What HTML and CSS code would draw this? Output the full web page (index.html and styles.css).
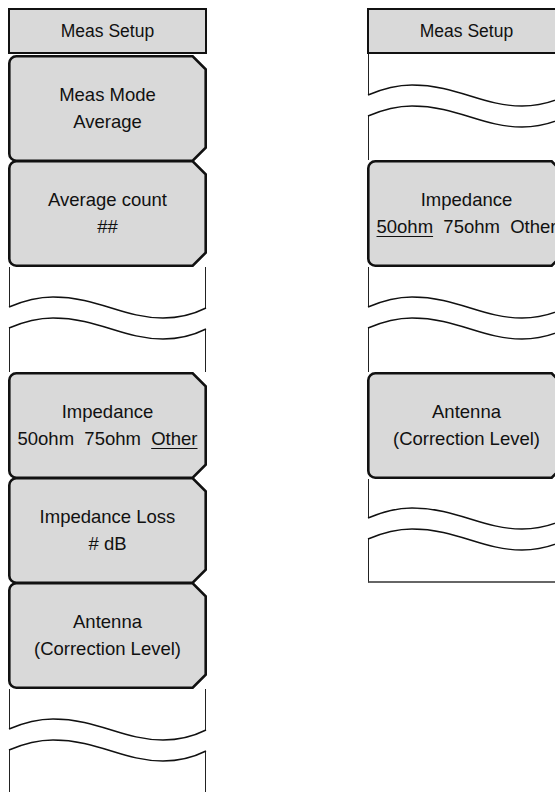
FILE: index.html
```html
<!DOCTYPE html>
<html lang="en">
<head>
    <meta charset="UTF-8">
    <meta name="viewport" content="width=device-width, initial-scale=1.0">
    <title>Meas Setup Menu</title>
    <link rel="stylesheet" href="styles.css">
</head>
<body>
    <svg class="defs" width="0" height="0">
        <symbol id="keyShape" viewBox="0 0 199 107">
            <path d="M8.3 1.3 H184.7 L197.7 14.3 V92.7 L184.7 105.7 H8.3 A7 7 0 0 1 1.3 98.7 V8.3 A7 7 0 0 1 8.3 1.3 Z" fill="#d9d9d9" stroke="#111" stroke-width="2.6"/>
        </symbol>
        <symbol id="breakMark" viewBox="0 0 199 46">
            <path d="M1.5 0 V12 M197.5 0 V13 M1.5 33 V46 M197.5 34 V46" fill="none" stroke="#222" stroke-width="1"/>
            <path d="M1 12 C15 6 28 2 45 2 C90 2 115 23 155 23 C175 23 188 18 198 13" fill="none" stroke="#111" stroke-width="1.4"/>
            <path d="M1 33 C15 27 28 23 45 23 C90 23 115 44 155 44 C175 44 188 39 198 34" fill="none" stroke="#111" stroke-width="1.4"/>
        </symbol>
    </svg>

    <div class="page">
        <!-- full menu -->
        <section class="menu">
            <div class="menu-title">Meas Setup</div>
            <div class="key first">
                <svg class="key-shape"><use href="#keyShape"/></svg>
                <div class="key-label">Meas Mode<br>Average</div>
            </div>
            <div class="key">
                <svg class="key-shape"><use href="#keyShape"/></svg>
                <div class="key-label">Average count<br>##</div>
            </div>
            <div class="gap h28"></div>
            <svg class="break"><use href="#breakMark"/></svg>
            <div class="gap h31"></div>
            <div class="key">
                <svg class="key-shape"><use href="#keyShape"/></svg>
                <div class="key-label">Impedance<br><span class="choices">50ohm  75ohm  <u>Other</u></span></div>
            </div>
            <div class="key">
                <svg class="key-shape"><use href="#keyShape"/></svg>
                <div class="key-label">Impedance Loss<br># dB</div>
            </div>
            <div class="key">
                <svg class="key-shape"><use href="#keyShape"/></svg>
                <div class="key-label">Antenna<br>(Correction Level)</div>
            </div>
            <div class="gap h28"></div>
            <svg class="break"><use href="#breakMark"/></svg>
            <div class="gap h40"></div>
        </section>

        <!-- short menu -->
        <section class="menu">
            <div class="menu-title">Meas Setup</div>
            <div class="gap h29"></div>
            <svg class="break"><use href="#breakMark"/></svg>
            <div class="gap h31"></div>
            <div class="key">
                <svg class="key-shape"><use href="#keyShape"/></svg>
                <div class="key-label">Impedance<br><span class="choices"><u>50ohm</u>  75ohm  Other</span></div>
            </div>
            <div class="gap h28"></div>
            <svg class="break"><use href="#breakMark"/></svg>
            <div class="gap h31"></div>
            <div class="key">
                <svg class="key-shape"><use href="#keyShape"/></svg>
                <div class="key-label">Antenna<br>(Correction Level)</div>
            </div>
            <div class="gap h27"></div>
            <svg class="break"><use href="#breakMark"/></svg>
            <div class="gap h31 end"></div>
        </section>
    </div>
</body>
</html>
```

FILE: styles.css
```css
* {
    box-sizing: border-box;
    margin: 0;
    padding: 0;
}
body {
    font-family: "Liberation Sans", Arial, sans-serif;
    color: #111;
    background: #fff;
    overflow: hidden;
}
.defs {
    display: block;
    width: 0;
    height: 0;
}
.page {
    display: flex;
    align-items: flex-start;
    gap: 160px;
    padding: 8px 0 0 8px;
    width: 555px;
    overflow: hidden;
}
.menu {
    width: 199px;
    flex-shrink: 0;
    display: flex;
    flex-direction: column;
}
.menu > * {
    flex-shrink: 0;
}
.menu-title {
    height: 46px;
    border: 2px solid #111;
    background: #d9d9d9;
    display: flex;
    align-items: center;
    justify-content: center;
    font-size: 17.5px;
}
.key {
    display: grid;
    height: 107px;
    font-size: 18.5px;
    line-height: 27px;
    text-align: center;
}
.key.first {
    margin-top: 1px;
}
.key + .key {
    margin-top: -2px;
}
.key > * {
    grid-area: 1 / 1;
}
.key-shape {
    width: 199px;
    height: 107px;
}
.key-label {
    align-self: center;
    padding-bottom: 1px;
}
.choices {
    white-space: pre;
}
.choices u {
    text-underline-offset: 3px;
}
.gap {
    margin: 0 1px;
    border-left: 1px solid #222;
    border-right: 1px solid #222;
}
.gap.end {
    margin-right: 0;
    border-right: none;
    border-bottom: 2px solid #666;
}
.h27 { height: 27px; }
.h28 { height: 28px; }
.h29 { height: 29px; }
.h31 { height: 31px; }
.h40 { height: 40px; }
.break {
    display: block;
    width: 199px;
    height: 46px;
}
```
